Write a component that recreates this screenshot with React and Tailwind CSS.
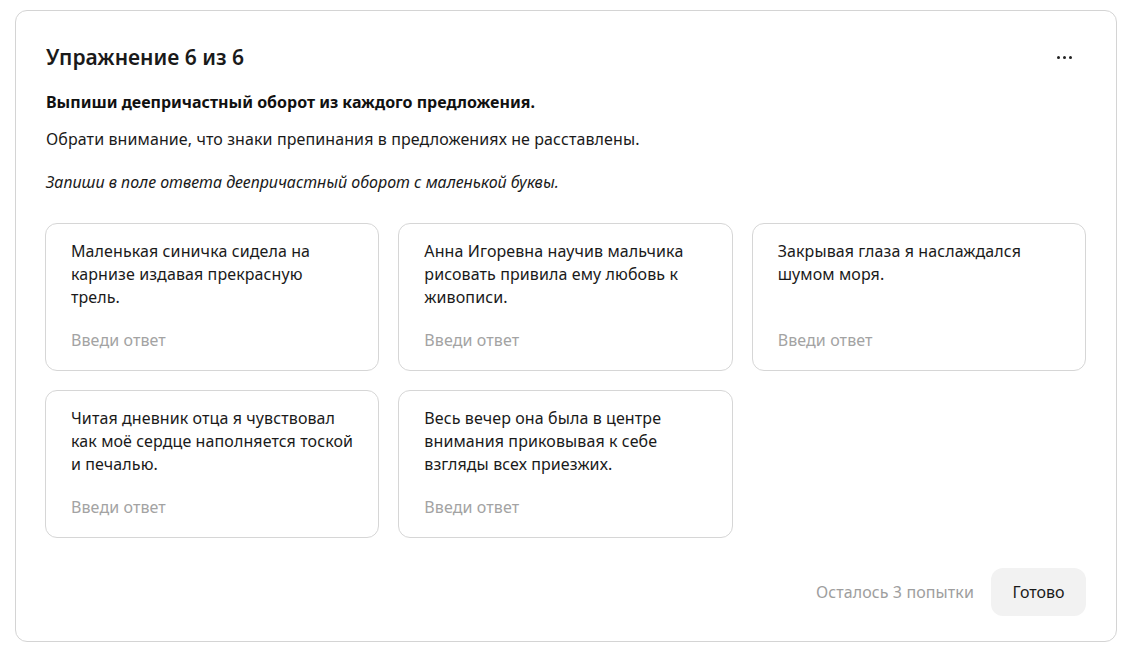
import React from 'react';

const items = [
  ['Маленькая синичка сидела на', 'карнизе издавая прекрасную', 'трель.'],
  ['Анна Игоревна научив мальчика', 'рисовать привила ему любовь к', 'живописи.'],
  ['Закрывая глаза я наслаждался', 'шумом моря.'],
  ['Читая дневник отца я чувствовал', 'как моё сердце наполняется тоской', 'и печалью.'],
  ['Весь вечер она была в центре', 'внимания приковывая к себе', 'взгляды всех приезжих.'],
];

function Card({ lines }) {
  return (
    <div className="h-[148px] rounded-[12px] border border-[#d6d6d6] bg-white pl-[25px] pr-[16px] pt-[16px] flex flex-col">
      <p className="text-[16px] leading-[23px] tracking-[0.1px] text-[#1a1a1a] whitespace-nowrap">
        {lines.map((l, i) => (
          <span key={i} className="block">{l}</span>
        ))}
      </p>
      <input
        className="mt-auto mb-[18px] w-full bg-transparent text-[16px] leading-[23px] tracking-[0.1px] outline-none placeholder:text-[#a3a3a3]"
        placeholder="Введи ответ"
      />
    </div>
  );
}

export default function App() {
  return (
    <div className="min-h-screen bg-white p-[10px_6px_20px_15px] font-['Noto_Sans',sans-serif]">
      <div className="w-[1102px] h-[632px] rounded-[12px] border border-[#d4d4d4] px-[30px] pt-[31px] flex flex-col">
        <div className="flex items-center justify-between">
          <h1 className="text-[21px] leading-[30px] font-semibold text-[#1a1a1a]">Упражнение 6 из 6</h1>
          <button className="mr-[14px] flex gap-[3px]">
            <span className="w-[3px] h-[3px] rounded-full bg-[#222]"></span>
            <span className="w-[3px] h-[3px] rounded-full bg-[#222]"></span>
            <span className="w-[3px] h-[3px] rounded-full bg-[#222]"></span>
          </button>
        </div>
        <p className="mt-[19px] text-[16px] leading-[22px] font-bold text-[#111]">Выпиши деепричастный оборот из каждого предложения.</p>
        <p className="mt-[15px] text-[16px] leading-[23px] tracking-[0.1px] text-[#1a1a1a]">Обрати внимание, что знаки препинания в предложениях не расставлены.</p>
        <p className="mt-[20px] text-[16px] leading-[23px] italic text-[#1a1a1a]">Запиши в поле ответа деепричастный оборот с маленькой буквы.</p>
        <div className="mt-[29px] grid grid-cols-3 gap-[19px] w-[1041px] -ml-[1px]">
          {items.map((t, i) => (
            <Card key={i} lines={t} />
          ))}
        </div>
        <div className="mt-[30px] flex items-center justify-end gap-[17px]">
          <span className="text-[16px] tracking-[0.1px] text-[#9e9e9e]">Осталось 3 попытки</span>
          <button className="h-[48px] w-[95px] rounded-[12px] bg-[#f2f2f2] text-[16px] text-[#1a1a1a]">Готово</button>
        </div>
      </div>
    </div>
  );
}
